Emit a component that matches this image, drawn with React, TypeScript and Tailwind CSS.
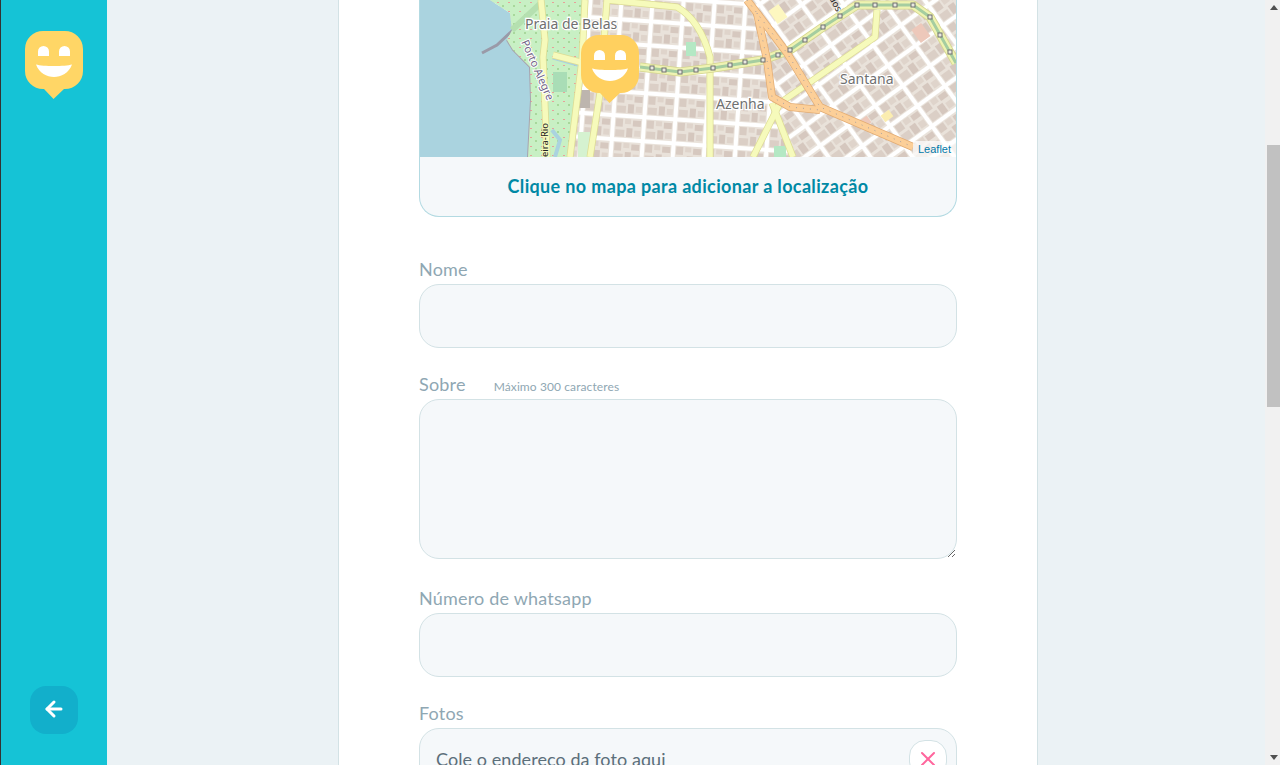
import { ArrowLeft, X } from "lucide-react";

const SmileLogo = ({ fill }: { fill: string }) => (
  <svg width="58" height="68" viewBox="0 0 58 68">
    <path d="M18 0h22a18 18 0 0 1 18 18v22a18 18 0 0 1-18 18h-1L28.500 68 19 58h-1A18 18 0 0 1 0 40V18A18 18 0 0 1 18 0z" fill={fill} />
    <path d="M13 25v-4.500a5.500 5.500 0 0 1 11 0V25zM34 25v-4.500a5.500 5.500 0 0 1 11 0V25z" fill="#fff" />
    <path d="M11 33.500C18 35.500 40 35.500 47 33.500C44 42 36 46 29 46C22 46 14 42 11 33.500z" fill="#fff" />
  </svg>
);

const yellowRoads = [
  "M585 0L582 60L570 157",
  "M607 0L600 93L590 157",
  "M541 0L545 40L543 57L547 157",
  "M553 55L580 62",
  "M607 0L677 7Q700 20 710 57L710 157",
  "M877 10L875 37L780 103L753 157",
  "M772 103L793 157",
];

const orangeRoads = [
  "M747 0L760 17L787 53L820 107L913 147",
  "M757 13L767 60L772 97L790 107L820 110",
];

const trunk = "M640 67L680 72L713 68L763 60L790 50L823 27L857 5L913 5L930 17L956 63";

const trunkStops = [
  [652, 68], [664, 70], [680, 72], [696, 70], [713, 68], [730, 65], [745, 62], [763, 60], [778, 55], [790, 50],
  [805, 40], [823, 27], [840, 16], [857, 5], [875, 5], [895, 5], [913, 5], [930, 17], [940, 35], [950, 52],
];

const MapArt = () => (
  <svg className="block" width="536" height="157" viewBox="420 0 536 157">
    <defs>
      <pattern id="blocksA" width="31" height="24" patternUnits="userSpaceOnUse" patternTransform="rotate(4)">
        <rect width="31" height="24" fill="#ffffff" />
        <rect x="2" y="2" width="27" height="20" fill="#E9E2DA" />
        <rect x="3" y="3" width="7" height="8" fill="#D8CBC2" />
        <rect x="12" y="3" width="6" height="5" fill="#DFD4CB" />
        <rect x="20" y="4" width="8" height="6" fill="#D6C8BF" />
        <rect x="3" y="14" width="9" height="7" fill="#DBCFC6" />
        <rect x="14" y="12" width="6" height="9" fill="#D5C7BE" />
        <rect x="22" y="14" width="6" height="6" fill="#DFD4CB" />
      </pattern>
      <pattern id="blocksB" width="34" height="25" patternUnits="userSpaceOnUse" patternTransform="rotate(-36)">
        <rect width="34" height="25" fill="#ffffff" />
        <rect x="2" y="2" width="30" height="21" fill="#E9E2DA" />
        <rect x="3" y="3" width="8" height="8" fill="#D8CBC2" />
        <rect x="13" y="3" width="7" height="6" fill="#DFD4CB" />
        <rect x="22" y="4" width="9" height="6" fill="#D6C8BF" />
        <rect x="3" y="14" width="10" height="8" fill="#DBCFC6" />
        <rect x="15" y="12" width="7" height="10" fill="#D5C7BE" />
        <rect x="24" y="14" width="7" height="7" fill="#DFD4CB" />
      </pattern>
      <pattern id="parkDots" width="11" height="9" patternUnits="userSpaceOnUse">
        <rect width="11" height="9" fill="#C8F0C4" />
        <rect x="2" y="2" width="2" height="1" fill="#E8A09A" />
        <rect x="7" y="5" width="2" height="2" fill="#A8D89C" />
      </pattern>
    </defs>

    {/* land + blocks */}
    <rect x="420" y="0" width="536" height="157" fill="url(#blocksA)" />
    <polygon points="748,0 956,0 956,157 790,157 772,100 762,50" fill="url(#blocksB)" />

    {/* water */}
    <path d="M420 0H490L510 13L512 30L507 40L513 50L530 67L531 100L528 157H420z" fill="#AAD3DF" />
    <path d="M482 53L497 45L513 30" stroke="#9A9AA8" strokeWidth="3" fill="none" />
    <path d="M507 40L513 50L530 67L531 100L528 157" stroke="#A8A3AE" strokeWidth="2" fill="none" />

    {/* park */}
    <path d="M490 0H541L585 0L582 60L570 157H528L531 100L530 67L513 50L507 40L512 30L510 13z" fill="url(#parkDots)" />
    <path d="M512 30L540 4" stroke="#B5E0B0" strokeWidth="6" fill="none" />
    <rect x="553" y="72" width="14" height="20" fill="#A9DDB6" />
    <path d="M553 57L578 64" stroke="#AAD3DF" strokeWidth="5" />
    <path d="M555 157L560 140L552 130" stroke="#AAD3DF" strokeWidth="4" fill="none" />
    <rect x="579" y="90" width="11" height="18" fill="#BDB5AE" />
    <rect x="578" y="132" width="12" height="25" fill="#D5F2D0" />

    {/* accent patches */}
    <rect x="772" y="6" width="12" height="16" fill="#FDF7C0" transform="rotate(-35 778 14)" />
    <rect x="686" y="42" width="10" height="14" fill="#B4E8C4" />
    <rect x="882" y="112" width="10" height="8" fill="#FBEDB0" transform="rotate(-36 887 116)" />
    <rect x="860" y="118" width="10" height="8" fill="#EDC8BA" transform="rotate(-36 865 122)" />
    <rect x="915" y="25" width="12" height="16" fill="#EDC8BA" transform="rotate(-36 921 33)" />
    <rect x="774" y="146" width="12" height="11" fill="#B4E8C4" />

    {/* roads */}
    <g fill="none" strokeLinejoin="round">
      {yellowRoads.map((d) => (
        <path key={d} d={d} stroke="#DDDC94" strokeWidth="7" />
      ))}
      {yellowRoads.map((d) => (
        <path key={d + "f"} d={d} stroke="#F6FABB" strokeWidth="5.500" />
      ))}
      <path d={trunk} stroke="#D5D68E" strokeWidth="9" />
      <path d={trunk} stroke="#EFF3B2" strokeWidth="7.500" />
      <path d={trunk} stroke="#A5CDA0" strokeWidth="3" />
      {orangeRoads.map((d) => (
        <path key={d} d={d} stroke="#E2AC74" strokeWidth="8" />
      ))}
      {orangeRoads.map((d) => (
        <path key={d + "f"} d={d} stroke="#FCCF98" strokeWidth="6.500" />
      ))}
      {orangeRoads.map((d) => (
        <path key={d + "d"} d={d} stroke="#A8A0A0" strokeWidth="1" strokeDasharray="1 6" />
      ))}
    </g>
    {trunkStops.map(([x, y]) => (
      <rect key={`${x}-${y}`} x={x - 2} y={y - 2} width="4" height="4" fill="#E8E8E0" stroke="#707070" strokeWidth="1" />
    ))}

    {/* labels */}
    <g fontFamily="'Noto Sans', sans-serif" fill="#707070" stroke="#ffffff" strokeWidth="2.500" paintOrder="stroke" fontSize="14">
      <text x="525" y="29">Praia de Belas</text>
      <text x="716" y="109">Azenha</text>
      <text x="840" y="84">Santana</text>
    </g>
    <text x="521" y="42" transform="rotate(66 521 42)" fontFamily="'Noto Sans', sans-serif" fontSize="11" fill="#6F6485" stroke="#ffffff" strokeWidth="2" paintOrder="stroke">Porto Alegre</text>
    <text x="548" y="157" transform="rotate(-90 548 157)" fontFamily="'Noto Sans', sans-serif" fontSize="9.500" fill="#222222" stroke="#F6FABB" strokeWidth="2" paintOrder="stroke">eira-Rio</text>
    <text x="829" y="-2" transform="rotate(62 829 -2)" fontFamily="'Noto Sans', sans-serif" fontSize="9.500" fill="#222222">dos</text>
  </svg>
);

const labelClass = "block h-[25px] text-[18px] leading-[21px] tracking-[0.2px] text-[#8FA7B3]";
const fieldClass = "block w-full rounded-[20px] border border-[#D3E2E5] bg-[#F5F8FA] outline-none";

export default function App() {
  return (
    <div className="flex h-[765px] w-[1280px] overflow-hidden bg-[#EBF2F5] font-['Lato','Noto_Sans',sans-serif]">
      <aside className="flex w-[107px] shrink-0 flex-col items-center justify-between border-l border-[#333333] bg-[#15C3D6] py-[31px]">
        <SmileLogo fill="#FFD666" />
        <button className="flex h-12 w-12 items-center justify-center rounded-2xl bg-[#12AFCB] text-white">
          <ArrowLeft size={24} strokeWidth={3} className="-translate-y-px" />
        </button>
      </aside>

      <main className="min-w-0 flex-1">
        <div className="ml-[231px] h-[765px] w-[700px] border-x border-[#D3E2E5] bg-white px-20">
          {/* map */}
          <div className="overflow-hidden rounded-b-[20px] border-x border-b border-[#B3DAE2] bg-[#F5F8FA]">
            <div className="relative">
              <MapArt />
              <div className="absolute left-[161px] top-[35px]">
                <SmileLogo fill="#FFD05F" />
              </div>
              <span className="absolute bottom-0 right-0 bg-white/70 px-[5px] text-[11px] leading-[16px] text-[#0078A8] font-['Liberation_Sans',sans-serif]">
                Leaflet
              </span>
            </div>
            <div className="flex h-[59px] items-center justify-center text-[18px] font-bold tracking-[0.35px] text-[#0089A5]">
              Clique no mapa para adicionar a localização
            </div>
          </div>

          {/* fields */}
          <div className="pt-[42px]">
            <label className={labelClass}>Nome</label>
            <input className={`${fieldClass} h-16`} />
          </div>
          <div className="pt-[26px]">
            <label className={labelClass}>
              Sobre
              <span className="ml-7 text-[12px] tracking-[0.1px]">Máximo 300 caracteres</span>
            </label>
            <textarea className={`${fieldClass} h-40 resize-y`} />
          </div>
          <div className="pt-[29px]">
            <label className={labelClass}>Número de whatsapp</label>
            <input className={`${fieldClass} h-16`} />
          </div>
          <div className="pt-[26px]">
            <label className={labelClass}>Fotos</label>
            <div className={`${fieldClass} flex items-start justify-between pb-3 pl-4 pr-[9px] pt-[11px]`}>
              <span className="pt-[5px] text-[18px] leading-[28px] tracking-[0.07px] text-[#5C6F7A]">Cole o endereço da foto aqui</span>
              <button className="flex h-[38px] w-[38px] items-center justify-center rounded-2xl border border-[#D3E2E5] bg-white text-[#FF669D]">
                <X size={24} />
              </button>
            </div>
          </div>
        </div>
      </main>

      {/* page scrollbar */}
      <div className="flex w-[15px] shrink-0 flex-col bg-[#F1F1F1]">
        <div className="flex h-[145px] justify-center pl-[2px] pt-[5px]">
          <svg width="8" height="5" viewBox="0 0 8 5"><path d="M4 0l4 5H0z" fill="#505050" /></svg>
        </div>
        <div className="ml-[2px] h-[262px] bg-[#C1C1C1]" />
        <div className="flex flex-1 items-end justify-center pb-[5px] pl-[2px]">
          <svg width="8" height="5" viewBox="0 0 8 5"><path d="M4 5L8 0H0z" fill="#505050" /></svg>
        </div>
      </div>
    </div>
  );
}
